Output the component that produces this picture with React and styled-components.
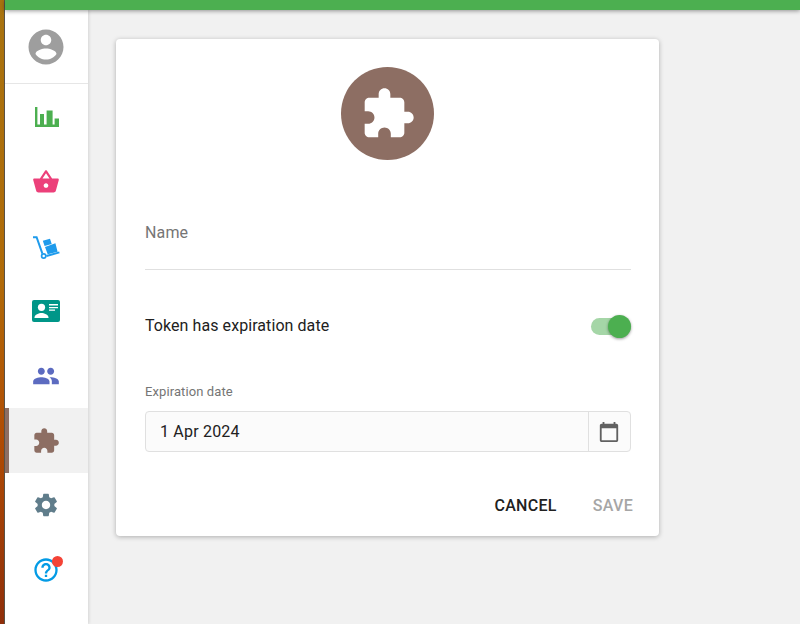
import React from 'react';
import styled, { createGlobalStyle } from 'styled-components';

const GlobalStyle = createGlobalStyle`
  html, body {
    margin: 0;
    padding: 0;
    height: 100%;
    background: #f1f1f1;
    font-family: Roboto, "Liberation Sans", sans-serif;
    overflow: hidden;
  }
  #root {
    height: 100%;
  }
`;

const Page = styled.div`
  display: flex;
  width: 800px;
  height: 624px;
  overflow: hidden;
`;

const Stripe = styled.div`
  width: 4px;
  background: linear-gradient(180deg, #a8730f 0%, #b06a08 45%, #b04c04 70%, #8f2f0a 100%);
  border-right: 1px solid #5b5348;
`;

const Main = styled.div`
  flex: 1;
  display: flex;
  flex-direction: column;
  min-width: 0;
`;

const TopBar = styled.div`
  height: 10px;
  background: #4caf50;
  box-shadow: 0 1px 4px rgba(0, 0, 0, 0.4);
  position: relative;
  z-index: 2;
`;

const Body = styled.div`
  flex: 1;
  display: flex;
  min-height: 0;
`;

const Sidebar = styled.nav`
  width: 83px;
  background: #fff;
  box-shadow: 1px 0 3px rgba(0, 0, 0, 0.12);
  display: flex;
  flex-direction: column;
  z-index: 1;
`;

const AvatarCell = styled.div`
  height: 74px;
  box-sizing: border-box;
  padding: 1px 2px 0 0;
  display: flex;
  align-items: center;
  justify-content: center;
  border-bottom: 1px solid #e6e6e6;
`;

const NavList = styled.div`
  padding-top: 1px;
  display: flex;
  flex-direction: column;
`;

const NavItem = styled.div`
  height: 64.7px;
  display: flex;
  align-items: center;
  justify-content: center;
  position: relative;
  background: ${({ $active }) => ($active ? '#f1f1f1' : 'transparent')};
  border-left: 4px solid ${({ $active, $accent }) => ($active ? $accent : 'transparent')};
  padding-right: 6px;
`;

const IconWrap = styled.span`
  position: relative;
  display: flex;
`;

const Dot = styled.span`
  position: absolute;
  top: 0;
  right: -3px;
  width: 11px;
  height: 11px;
  border-radius: 50%;
  background: #f44336;
`;

const Content = styled.main`
  flex: 1;
  padding: 29px 0 0 28px;
`;

const Card = styled.section`
  width: 543px;
  height: 497px;
  box-sizing: border-box;
  background: #fff;
  border-radius: 4px;
  box-shadow: 0 1px 5px rgba(0, 0, 0, 0.28);
  padding: 28px 28px 0 29px;
  display: flex;
  flex-direction: column;
`;

const Badge = styled.div`
  width: 93px;
  height: 93px;
  border-radius: 50%;
  background: #8d6e63;
  align-self: center;
  margin-left: -1px;
  display: flex;
  align-items: center;
  justify-content: center;
`;

const NameField = styled.div`
  margin-top: 62px;
  height: 48px;
  box-sizing: border-box;
  border-bottom: 1px solid #e0e0e0;
  color: #757575;
  font-size: 16px;
  line-height: 19px;
  padding-top: 1px;
  letter-spacing: 0.15px;
`;

const ToggleRow = styled.div`
  margin-top: 35px;
  display: flex;
  align-items: center;
  justify-content: space-between;
  height: 40px;
`;

const ToggleLabel = styled.span`
  font-size: 16px;
  color: #212121;
  letter-spacing: 0.07px;
`;

const Track = styled.span`
  position: relative;
  display: block;
  width: 40px;
  height: 17px;
  margin-top: 2px;
  border-radius: 9px;
  background: #a5d6a7;
`;

const Thumb = styled.span`
  position: absolute;
  top: -3px;
  right: 0;
  width: 23px;
  height: 23px;
  border-radius: 50%;
  background: #4caf50;
  box-shadow: 0 1px 3px rgba(0, 0, 0, 0.4);
`;

const DateLabel = styled.label`
  margin-top: 39px;
  font-size: 13px;
  line-height: 15px;
  color: #757575;
  letter-spacing: 0.1px;
`;

const DateGroup = styled.div`
  margin-top: 12px;
  height: 41px;
  box-sizing: border-box;
  display: flex;
  background: #fbfbfb;
  border: 1px solid #e0e0e0;
  border-radius: 4px;
`;

const DateValue = styled.span`
  flex: 1;
  padding-left: 14px;
  font-size: 16px;
  line-height: 40px;
  color: #212121;
  letter-spacing: 0.2px;
`;

const DateButton = styled.span`
  width: 42px;
  box-sizing: border-box;
  padding-right: 1px;
  border-left: 1px solid #e0e0e0;
  display: flex;
  align-items: center;
  justify-content: center;
`;

const Actions = styled.div`
  margin-top: 34px;
  margin-right: -2px;
  display: flex;
  justify-content: flex-end;
  gap: 36px;
`;

const ActionButton = styled.span`
  font-size: 16px;
  font-weight: 500;
  line-height: 40px;
  letter-spacing: 0.3px;
  color: ${({ $disabled }) => ($disabled ? '#a6a6a6' : '#212121')};
`;

const EXTENSION = 'M20.5 11H19V7c0-1.1-.9-2-2-2h-4V3.5C13 2.12 11.88 1 10.5 1S8 2.12 8 3.5V5H4c-1.1 0-1.99.9-1.99 2v3.8H3.5c1.49 0 2.7 1.21 2.7 2.7s-1.21 2.7-2.7 2.7H2V20c0 1.1.9 2 2 2h3.8v-1.5c0-1.49 1.21-2.7 2.7-2.7 1.49 0 2.7 1.21 2.7 2.7V22H17c1.1 0 2-.9 2-2v-4h1.5c1.38 0 2.5-1.12 2.5-2.5S21.88 11 20.5 11z';

const Icon = ({ size = 24, color, d }) => (
  <svg width={size} height={size} viewBox="0 0 24 24" fill={color}>
    <path d={d} />
  </svg>
);

const AccountIcon = () => (
  <Icon size={42} color="#9e9e9e" d="M12 2C6.48 2 2 6.48 2 12s4.48 10 10 10 10-4.48 10-10S17.52 2 12 2zm0 3c1.66 0 3 1.34 3 3s-1.34 3-3 3-3-1.34-3-3 1.34-3 3-3zm0 14.2c-2.5 0-4.71-1.28-6-3.22.03-1.99 4-3.08 6-3.08 1.99 0 5.97 1.09 6 3.08-1.29 1.94-3.5 3.22-6 3.22z" />
);

const ChartIcon = () => (
  <svg width="26" height="20" viewBox="-2 0 26 20" fill="#4caf50">
    <path d="M0 0h2.4v17.6H5V7h4v10.6h2.6V3.5h6v14.1h2V11.5H24V20H0z" />
  </svg>
);

const BasketIcon = () => (
  <Icon size={28} color="#ec407a" d="M17.21 9l-4.38-6.56c-.19-.28-.51-.42-.83-.42-.32 0-.64.14-.83.43L6.79 9H2c-.55 0-1 .45-1 1 0 .09.01.18.04.27l2.54 9.27c.23.84 1 1.46 1.92 1.46h13c.92 0 1.69-.62 1.93-1.46l2.54-9.27L23 10c0-.55-.45-1-1-1h-4.79zM9 9l3-4.4L15 9H9zm3 8c-1.1 0-2-.9-2-2s.9-2 2-2 2 .9 2 2-.9 2-2 2z" />
);

const DollyIcon = () => (
  <svg width="28" height="24" viewBox="0 0 28 24" fill="none">
    <path d="M1 2.2h3.6l5.8 16.4" stroke="#1e9bec" strokeWidth="2" />
    <path d="M14.4 21 27.4 17.4" stroke="#1e9bec" strokeWidth="2" />
    <circle cx="11.7" cy="21" r="2.1" stroke="#1e9bec" strokeWidth="1.7" />
    <path d="M10.8 5.8 18 3.8 19.7 9 12.6 11zM13 11.9 23.4 8.3 25.6 16.7 15.7 19.3z" fill="#1e9bec" />
  </svg>
);

const CardIcon = () => (
  <svg width="28" height="22" viewBox="0 0 28 22">
    <rect width="28" height="22" rx="2" fill="#009688" />
    <circle cx="9.5" cy="7.3" r="3.6" fill="#fff" />
    <path d="M2.5 17.5c0-3 4.5-4.6 7-4.6s7 1.6 7 4.6v.5h-14z" fill="#fff" />
    <path d="M17 4h9v1.4h-9zM17 7h9v1.2h-9zM17 9.6h6v1.2h-6z" fill="#fff" />
  </svg>
);

const PeopleIcon = () => (
  <Icon size={28} color="#5c6bc0" d="M16 11c1.66 0 2.99-1.34 2.99-3S17.66 5 16 5c-1.66 0-3 1.34-3 3s1.34 3 3 3zm-8 0c1.66 0 2.99-1.34 2.99-3S9.66 5 8 5C6.34 5 5 6.34 5 8s1.34 3 3 3zm0 2c-2.33 0-7 1.17-7 3.5V19h14v-2.5c0-2.33-4.67-3.5-7-3.5zm8 0c-.29 0-.62.02-.97.05 1.16.84 1.97 1.97 1.97 3.45V19h6v-2.5c0-2.33-4.67-3.5-7-3.5z" />
);

const GearIcon = () => (
  <Icon size={28} color="#607d8b" d="M19.14 12.94c.04-.3.06-.61.06-.94 0-.32-.02-.64-.07-.94l2.03-1.58c.18-.14.23-.41.12-.61l-1.92-3.32c-.12-.22-.37-.29-.59-.22l-2.39.96c-.5-.38-1.03-.7-1.62-.94l-.36-2.54c-.04-.24-.24-.41-.48-.41h-3.84c-.24 0-.43.17-.47.41l-.36 2.54c-.59.24-1.13.57-1.62.94l-2.39-.96c-.22-.08-.47 0-.59.22L2.74 8.87c-.12.21-.08.47.12.61l2.03 1.58c-.05.3-.09.63-.09.94s.02.64.07.94l-2.03 1.58c-.18.14-.23.41-.12.61l1.92 3.32c.12.22.37.29.59.22l2.39-.96c.5.38 1.03.7 1.62.94l.36 2.54c.05.24.24.41.48.41h3.84c.24 0 .44-.17.47-.41l.36-2.54c.59-.24 1.13-.56 1.62-.94l2.39.96c.22.08.47 0 .59-.22l1.92-3.32c.12-.22.07-.47-.12-.61l-2.01-1.58zM12 15.6c-1.98 0-3.6-1.62-3.6-3.6s1.62-3.6 3.6-3.6 3.6 1.62 3.6 3.6-1.62 3.6-3.6 3.6z" />
);

const HelpIcon = () => (
  <Icon size={28} color="#039be5" d="M11 18h2v-2h-2v2zm1-16C6.48 2 2 6.48 2 12s4.48 10 10 10 10-4.48 10-10S17.52 2 12 2zm0 18c-4.41 0-8-3.59-8-8s3.59-8 8-8 8 3.59 8 8-3.59 8-8 8zm0-14c-2.21 0-4 1.79-4 4h2c0-1.1.9-2 2-2s2 .9 2 2c0 2-3 1.75-3 5h2c0-2.25 3-2.5 3-5 0-2.21-1.79-4-4-4z" />
);

const CalendarIcon = () => (
  <Icon size={22} color="#616161" d="M20 3h-1V1h-2v2H7V1H5v2H4c-1.1 0-2 .9-2 2v16c0 1.1.9 2 2 2h16c1.1 0 2-.9 2-2V5c0-1.1-.9-2-2-2zm0 18H4V8h16v13z" />
);

const navItems = [
  { key: 'stats', icon: <ChartIcon /> },
  { key: 'basket', icon: <BasketIcon /> },
  { key: 'dolly', icon: <DollyIcon /> },
  { key: 'contact', icon: <CardIcon /> },
  { key: 'people', icon: <PeopleIcon /> },
  { key: 'tokens', icon: <Icon size={28} color="#8d6e63" d={EXTENSION} />, active: true, accent: '#8d6e63' },
  { key: 'settings', icon: <GearIcon /> },
  { key: 'help', icon: <HelpIcon />, dot: true },
];

export default function App() {
  return (
    <Page>
      <GlobalStyle />
      <Stripe />
      <Main>
        <TopBar />
        <Body>
          <Sidebar>
            <AvatarCell>
              <AccountIcon />
            </AvatarCell>
            <NavList>
              {navItems.map((item) => (
                <NavItem key={item.key} $active={item.active} $accent={item.accent}>
                  <IconWrap>
                    {item.icon}
                    {item.dot && <Dot />}
                  </IconWrap>
                </NavItem>
              ))}
            </NavList>
          </Sidebar>
          <Content>
            <Card>
              <Badge>
                <Icon size={56} color="#fff" d={EXTENSION} />
              </Badge>
              <NameField>Name</NameField>
              <ToggleRow>
                <ToggleLabel>Token has expiration date</ToggleLabel>
                <Track>
                  <Thumb />
                </Track>
              </ToggleRow>
              <DateLabel>Expiration date</DateLabel>
              <DateGroup>
                <DateValue>1 Apr 2024</DateValue>
                <DateButton>
                  <CalendarIcon />
                </DateButton>
              </DateGroup>
              <Actions>
                <ActionButton>CANCEL</ActionButton>
                <ActionButton $disabled>SAVE</ActionButton>
              </Actions>
            </Card>
          </Content>
        </Body>
      </Main>
    </Page>
  );
}
